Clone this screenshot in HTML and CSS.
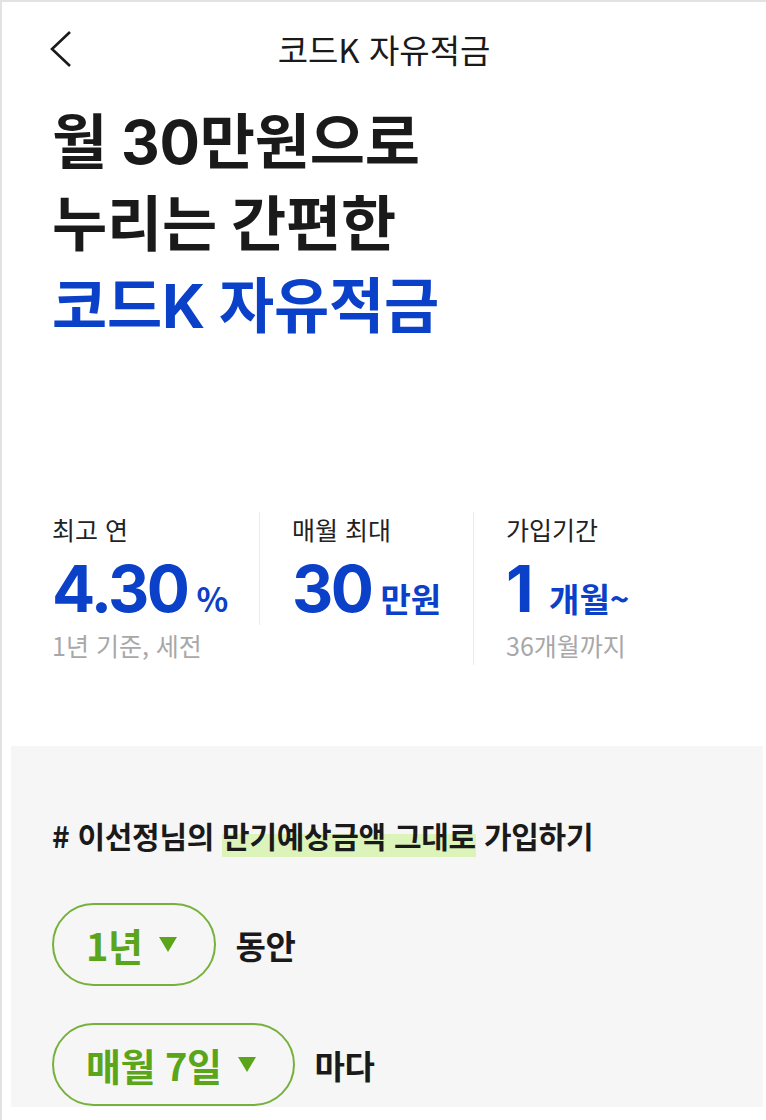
FILE: index.html
```html
<!DOCTYPE html>
<html lang="ko">
<head>
  <meta charset="UTF-8">
  <meta name="viewport" content="width=device-width, initial-scale=1.0">
  <title>코드K 자유적금</title>
  <link rel="stylesheet" href="styles.css">
</head>
<body>

<header class="topbar">
  <span class="back">
    <svg width="24" height="38" viewBox="0 0 24 38"><path d="M21 2 L3 19 L21 36" fill="none" stroke="#1a1a1a" stroke-width="2.6"/></svg>
  </span>
  <h1 class="title">코드K 자유적금</h1>
</header>

<section class="hero">
  <p>월 30만원으로</p>
  <p>누리는 간편한</p>
  <p class="blue">코드K 자유적금</p>
</section>

<section class="stats">
  <div class="stat">
    <div class="label">최고 연</div>
    <div class="value">4.30<span class="unit">%</span></div>
    <div class="note">1년 기준, 세전</div>
  </div>
  <div class="stat">
    <div class="label">매월 최대</div>
    <div class="value">30<span class="unit">만원</span></div>
  </div>
  <div class="stat">
    <div class="label">가입기간</div>
    <div class="value">1<span class="unit wide">개월~</span></div>
    <div class="note">36개월까지</div>
  </div>
</section>

<section class="plan">
  <h2 class="plan-title"># 이선정님의 <mark>만기예상금액 그대로</mark> 가입하기</h2>
  <div class="row">
    <button class="pill">1년 <span class="tri"></span></button>
    <span class="row-text">동안</span>
  </div>
  <div class="row">
    <button class="pill">매월 7일 <span class="tri"></span></button>
    <span class="row-text">마다</span>
  </div>
</section>

</body>
</html>
```

FILE: styles.css
```css
body {
  font-family: "Noto Sans CJK KR", "Noto Sans", sans-serif;
  margin: 0;
  padding: 0;
  background: #fff;
  color: #1a1a1a;
  border-top: 2px solid #e2e2e2;
  border-left: 2px solid #e2e2e2;
  height: 1118px;
  overflow: hidden;
}

.topbar {
  position: relative;
  height: 96px;
  display: flex;
  align-items: center;
  justify-content: center;
}

.back {
  position: absolute;
  left: 47px;
  top: 28px;
}

.title {
  margin: 0;
  font-size: 33px;
  font-weight: 400;
  margin-top: -2px;
}

.hero {
  padding: 3px 50px 0;
}

.hero p {
  margin: 0;
  font-family: Inter, "Noto Sans CJK KR", sans-serif;
  font-size: 60px;
  font-weight: 700;
  line-height: 82px;
  letter-spacing: -0.2px;
  color: #1a1a1a;
}

.hero .blue {
  color: #0b40c9;
}

.stats {
  display: flex;
  padding: 165px 0 0 50px;
}

.stat {
  height: 153px;
}

.stat:nth-child(1) {
  width: 207px;
}

.stat:nth-child(2) {
  width: 181px;
  padding-left: 32px;
  border-left: 1.5px solid #ececec;
  height: 113px;
}

.stat:nth-child(3) {
  padding-left: 32px;
  border-left: 1.5px solid #ececec;
}

.label {
  font-size: 25px;
  line-height: 34px;
  color: #222;
}

.value {
  font-family: Inter, "Noto Sans CJK KR", sans-serif;
  font-size: 64px;
  font-weight: 700;
  color: #0b40c9;
  line-height: 72px;
  margin-top: 7px;
  letter-spacing: -2.5px;
}

.unit {
  font-family: "Noto Sans CJK KR", sans-serif;
  font-size: 33px;
  margin-left: 9px;
  letter-spacing: 0;
}

.unit.wide {
  margin-left: 18px;
}

.note {
  font-size: 25px;
  color: #a8a8a8;
  line-height: 28px;
  margin-top: -3px;
}

.plan {
  margin: 81px 3px 0 9px;
  background: #f6f6f6;
  padding: 69px 41px 0;
  height: 361px;
  box-sizing: border-box;
  overflow: hidden;
}

.plan-title {
  margin: 0 0 48px;
  font-size: 30px;
  font-weight: 700;
  line-height: 40px;
  letter-spacing: -0.3px;
}

mark {
  background: linear-gradient(transparent 48%, #dcf3b9 48%);
  color: inherit;
}

.row {
  display: flex;
  align-items: center;
  gap: 19px;
  margin-bottom: 37px;
}

.pill {
  font-family: inherit;
  height: 83px;
  padding: 0 37px 0 32px;
  border: 2px solid #76b13c;
  border-radius: 42px;
  background: transparent;
  color: #5ba51a;
  font-size: 38px;
  font-weight: 700;
  letter-spacing: -0.5px;
  display: flex;
  align-items: center;
  gap: 17px;
}

.tri {
  width: 0;
  height: 0;
  border-left: 9px solid transparent;
  border-right: 9px solid transparent;
  border-top: 15px solid #5ba51a;
}

.row-text {
  font-size: 33px;
  font-weight: 700;
  letter-spacing: -0.3px;
}
```
